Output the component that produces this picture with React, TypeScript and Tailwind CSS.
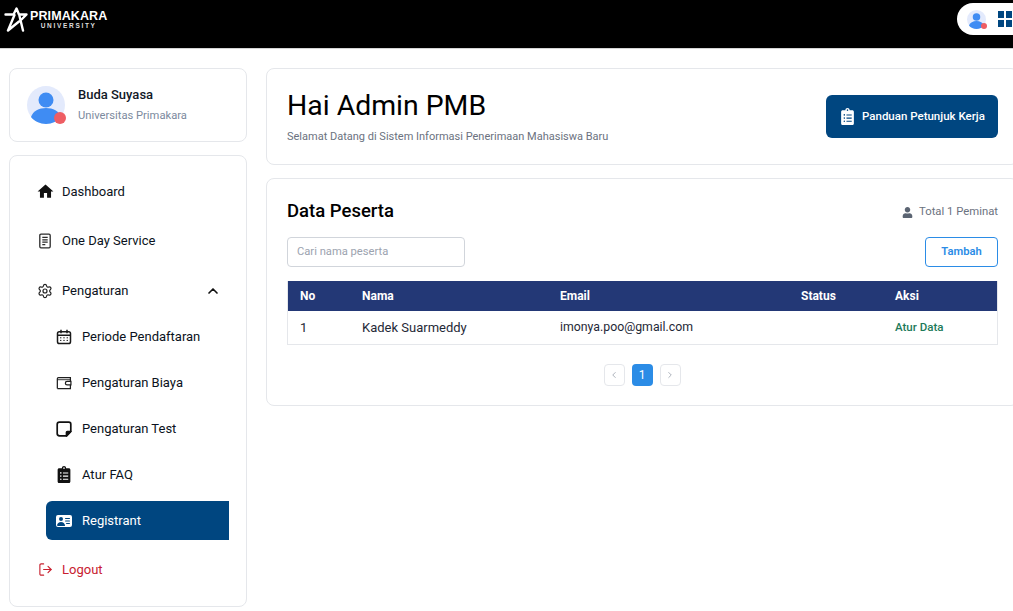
import { ChevronLeft, ChevronRight, ChevronUp, LogOut, Settings } from "lucide-react"
import { BsPersonVcardFill } from "react-icons/bs"
import { FaClipboardList, FaUser } from "react-icons/fa"
import { MdHome } from "react-icons/md"
import type { ReactNode } from "react"

function Avatar({ size, dot }: { size: "lg" | "sm"; dot: string }) {
  const box = size === "lg" ? "w-[38px] h-[38px]" : "w-[19px] h-[19px]"
  return (
    <div className={`relative shrink-0 ${box}`}>
      <svg viewBox="0 0 38 38" className="w-full h-full">
        <circle cx="19" cy="19" r="19" fill="#e3eafc" />
        <circle cx="19" cy="14" r="7.5" fill="#3f8cf3" />
        <path d="M4 31c2-6 8-9 15-9s13 3 15 9c-3 4-9 7-15 7S7 35 4 31z" fill="#3f8cf3" />
      </svg>
      <span className={`absolute rounded-full bg-[#ee5d63] ${dot}`} />
    </div>
  )
}

function Logo() {
  return (
    <svg viewBox="0 0 24 25" className="w-[24px] h-[25px]" fill="none" stroke="#fff" strokeWidth="2.4" strokeLinejoin="round" strokeLinecap="round">
      <path d="M1.500 7.500H9.500L12.500 1.500L15 7.500H22.500L17.500 12.500" />
      <path d="M4 23.500L10.500 8M4 23.500L15 14.500M19 23.500L15.500 9" />
    </svg>
  )
}

function DocIcon() {
  return (
    <svg viewBox="0 0 16 16" className="w-[16px] h-[16px]" fill="none" stroke="#2b2b2b" strokeWidth="1.3">
      <rect x="2.800" y="1.200" width="10.400" height="13.600" rx="1.200" />
      <path d="M5.300 4.400h5.400M5.300 6.800h5.400M5.300 9.200h5.400M5.300 11.600h3" />
    </svg>
  )
}

function CalendarIcon() {
  return (
    <svg viewBox="0 0 16 16" className="w-[16px] h-[16px]" fill="none" stroke="#1a1a1a" strokeWidth="1.500">
      <rect x="1.500" y="2.800" width="13" height="11.700" rx="1.800" />
      <path d="M1.500 6.300h13M5 .8v3.400M11 .8v3.400" />
      <path d="M4 8.800h1.400M7.300 8.800h1.400M10.600 8.800h1.400M4 11.400h1.400M7.300 11.400h1.400M10.600 11.400h1.400" strokeWidth="1" />
    </svg>
  )
}

function WalletIcon() {
  return (
    <svg viewBox="0 0 18 16" className="w-[18px] h-[16px]" fill="none" stroke="#1f1f1f" strokeWidth="1.400">
      <path d="M1.500 14.300V3.200c0-.8.500-1.300 1.300-1.300h13.400v4.200" />
      <path d="M1.500 4.300h14.700" strokeWidth="1" />
      <path d="M16.200 10.300v4H1.500" />
      <path d="M16.800 6.300h-4.300a1.900 1.900 0 0 0 0 3.900h4.300z" />
    </svg>
  )
}

function NoteIcon() {
  return (
    <svg viewBox="0 0 16 16" className="w-[16px] h-[16px]" fill="none" stroke="#111" strokeWidth="1.700" strokeLinejoin="round">
      <path d="M3.500 1.200h9.300c1.100 0 2 .9 2 2v7.300l-4.300 4.300H3.500c-1.300 0-2.300-1-2.300-2.300V3.500c0-1.300 1-2.300 2.300-2.300z" />
      <path d="M14.800 10.500l-4.300 4.300v-3.500c0-.5.300-.8.800-.8z" fill="#111" />
    </svg>
  )
}

function NavRow({ icon, label, sub, active, danger, trailing }: { icon: ReactNode; label: string; sub?: boolean; active?: boolean; danger?: boolean; trailing?: ReactNode }) {
  return (
    <div
      className={`flex items-center h-[39px] rounded-l-md text-[13px] font-normal ${sub ? "ml-[19px] pl-[10px]" : "pl-[10px]"} ${active ? "bg-[#004680] text-white" : danger ? "text-[#c8202f]" : "text-[#0b1220]"}`}
    >
      <span className={`flex justify-center items-center w-[16px] ${sub ? "mr-[10px]" : "mr-[9px]"}`}>{icon}</span>
      <span className="flex-1">{label}</span>
      {trailing}
    </div>
  )
}

const headCell = "h-[30px] flex items-center bg-[#233876] text-white text-[12px] font-bold"
const bodyCell = "h-[33px] flex items-center text-[#1f2937]"
const pageBtn = "flex items-center justify-center w-[21px] h-[22px] border border-[#e5e7eb] rounded text-[#9ca3af]"

export default function App() {
  return (
    <div className="h-[611px] w-[1013px] overflow-hidden bg-white font-['Roboto',sans-serif]">
      {/* Topbar */}
      <header className="flex items-center justify-between h-[49px] bg-black border-b border-[#d4d4d4]">
        <div className="flex items-center pl-[4px] pb-[9px]">
          <Logo />
          <div className="flex flex-col items-center ml-[2px]">
            <span className="text-[12.500px] leading-[12px] font-bold tracking-[0.1px] text-white font-['Liberation_Sans',sans-serif]">PRIMAKARA</span>
            <span className="text-[6.500px] leading-[8px] font-semibold tracking-[1.700px] text-[#ddd] font-['Liberation_Sans',sans-serif]">UNIVERSITY</span>
          </div>
        </div>
        <div className="flex items-center gap-[12px] h-[32px] w-[59px] -mr-[3px] mb-[10px] pl-[10px] bg-white rounded-l-full shrink-0">
          <Avatar size="sm" dot="w-[6px] h-[6px] right-[-1px] bottom-0" />
          <div className="grid grid-cols-2 gap-[2px] shrink-0">
            <span className="w-[6px] h-[7px] bg-[#004680]" />
            <span className="w-[6px] h-[7px] bg-[#004680]" />
            <span className="w-[6px] h-[7px] bg-[#004680]" />
            <span className="w-[6px] h-[7px] bg-[#004680]" />
          </div>
        </div>
      </header>

      <div className="flex gap-[19px] pl-[9px] pt-[19px] w-[1019px]">
        {/* Sidebar */}
        <aside className="flex flex-col gap-[13px] w-[238px] shrink-0">
          <div className="flex items-center gap-[13px] h-[74px] px-[17px] border border-[#e5e7eb] rounded-lg">
            <Avatar size="lg" dot="w-[12px] h-[12px] right-[-1px] bottom-0" />
            <div className="flex flex-col gap-[4px] -mt-px">
              <span className="text-[13px] leading-[18px] font-medium text-[#111827]">Buda Suyasa</span>
              <span className="text-[11.200px] leading-[16px] text-[#7c8a9e]">Universitas Primakara</span>
            </div>
          </div>

          <nav className="flex flex-col h-[452px] pt-[16px] pl-[17px] pr-[17px] border border-[#e5e7eb] rounded-lg">
            <div className="flex flex-col gap-[10px]">
              <NavRow icon={<MdHome size={19} color="#111" className="shrink-0" />} label="Dashboard" />
              <NavRow icon={<DocIcon />} label="One Day Service" />
              <div className="mt-px">
                <NavRow
                  icon={<Settings size={16} strokeWidth={1.8} color="#222" />}
                  label="Pengaturan"
                  trailing={<ChevronUp size={16} strokeWidth={2.5} color="#111" className="mr-[8px]" />}
                />
              </div>
            </div>
            <div className="flex flex-col gap-[7px] mt-[7px]">
              <NavRow sub icon={<CalendarIcon />} label="Periode Pendaftaran" />
              <NavRow sub icon={<WalletIcon />} label="Pengaturan Biaya" />
              <NavRow sub icon={<NoteIcon />} label="Pengaturan Test" />
              <NavRow sub icon={<FaClipboardList size={17} color="#111" />} label="Atur FAQ" />
              <NavRow sub active icon={<BsPersonVcardFill size={18} color="#fff" />} label="Registrant" />
            </div>
            <div className="mt-[10px]">
              <NavRow danger icon={<LogOut size={15} strokeWidth={1.800} />} label="Logout" />
            </div>
          </nav>
        </aside>

        {/* Main */}
        <main className="flex flex-col gap-[13px] flex-1 min-w-0">
          <section className="flex items-center justify-between h-[97px] pl-[20px] pr-[20px] border border-[#e5e7eb] rounded-lg">
            <div className="flex flex-col -mt-[2px]">
              <h1 className="text-[28.400px] leading-[40px] font-normal text-black">Hai Admin PMB</h1>
              <p className="text-[11px] leading-[16px] mt-[3px] text-[#6b7280]">Selamat Datang di Sistem Informasi Penerimaan Mahasiswa Baru</p>
            </div>
            <button className="flex items-center gap-[6px] w-[172px] h-[43px] pl-[13px] bg-[#004680] rounded-md text-[11.500px] font-medium text-white">
              <FaClipboardList size={17} color="#fff" />
              Panduan Petunjuk Kerja
            </button>
          </section>

          <section className="flex flex-col h-[228px] pt-[22px] pl-[20px] pr-[20px] border border-[#e5e7eb] rounded-lg">
            <div className="flex items-center justify-between h-[21px]">
              <h2 className="text-[18.500px] leading-[21px] font-medium text-black">Data Peserta</h2>
              <span className="flex items-center gap-[6px] mt-px text-[11.300px] text-[#6b7280]">
                <FaUser size={11} color="#5b6472" />
                Total 1 Peminat
              </span>
            </div>
            <div className="flex items-center justify-between mt-[15px]">
              <div className="flex items-center w-[178px] h-[30px] pt-px px-[9px] border border-[#d1d5db] rounded text-[11.200px] text-[#9ca3af]">Cari nama peserta</div>
              <button className="w-[73px] h-[30px] pt-px border border-[#2b8ce6] rounded text-[11.200px] font-semibold text-[#2b8ce6]">Tambah</button>
            </div>

            <div className="mt-[14px] grid grid-cols-[74px_198px_241px_94px_102px] border-b border-x border-[#e5e7eb]">
              <div className={`${headCell} pl-[12px]`}>No</div>
              <div className={headCell}>Nama</div>
              <div className={headCell}>Email</div>
              <div className={headCell}>Status</div>
              <div className={headCell}>Aksi</div>
              <div className={`${bodyCell} pl-[12px] text-[13px]`}>1</div>
              <div className={`${bodyCell} text-[13px]`}>Kadek Suarmeddy</div>
              <div className={`${bodyCell} text-[12.300px]`}>imonya.poo@gmail.com</div>
              <div className="h-[33px]" />
              <div className="h-[33px] flex items-center text-[11.500px] font-medium text-[#1d7a5a]">Atur Data</div>
            </div>

            <div className="flex justify-center gap-[7px] mt-[19px] pr-[1px]">
              <span className={pageBtn}><ChevronLeft size={10} /></span>
              <span className="flex items-center justify-center w-[21px] h-[22px] bg-[#2b8ce6] rounded text-[12px] font-normal text-white">1</span>
              <span className={pageBtn}><ChevronRight size={10} /></span>
            </div>
          </section>
        </main>
      </div>
    </div>
  )
}
